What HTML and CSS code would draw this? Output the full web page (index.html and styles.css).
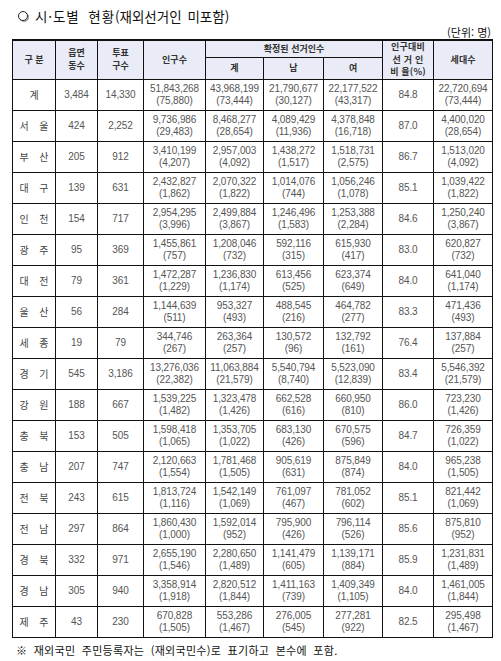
FILE: index.html
```html
<!DOCTYPE html>
<html lang="ko">
<head>
<meta charset="utf-8">
<link rel="stylesheet" href="styles.css">
</head>
<body>
<div class="page">
  <div class="title"><span class="ring"></span><span class="title-text">시·도별 현황<span class="paren">(재외선거인 미포함)</span></span></div>
  <div class="unit">(단위: 명)</div>
  <table class="tbl">
    <colgroup>
      <col style="width:43px"><col style="width:42px"><col style="width:46px"><col style="width:62px"><col style="width:58px"><col style="width:60px"><col style="width:59px"><col style="width:51px"><col style="width:59px">
    </colgroup>
    <thead>
      <tr class="h1">
        <th rowspan="2">구 분</th>
        <th rowspan="2">읍면<br>동수</th>
        <th rowspan="2">투표<br>구수</th>
        <th rowspan="2">인구수</th>
        <th colspan="3">확정된 선거인수</th>
        <th rowspan="2" class="ratio">인구대비<br>선 거 인<br>비 율(%)</th>
        <th rowspan="2">세대수</th>
      </tr>
      <tr class="h2">
        <th>계</th><th>남</th><th>여</th>
      </tr>
    </thead>
    <tbody>
      <tr><td class="rg">계</td><td>3,484</td><td>14,330</td><td>51,843,268<br>(75,880)</td><td>43,968,199<br>(73,444)</td><td>21,790,677<br>(30,127)</td><td>22,177,522<br>(43,317)</td><td>84.8</td><td>22,720,694<br>(73,444)</td></tr>
      <tr><td class="rg">서 울</td><td>424</td><td>2,252</td><td>9,736,986<br>(29,483)</td><td>8,468,277<br>(28,654)</td><td>4,089,429<br>(11,936)</td><td>4,378,848<br>(16,718)</td><td>87.0</td><td>4,400,020<br>(28,654)</td></tr>
      <tr><td class="rg">부 산</td><td>205</td><td>912</td><td>3,410,199<br>(4,207)</td><td>2,957,003<br>(4,092)</td><td>1,438,272<br>(1,517)</td><td>1,518,731<br>(2,575)</td><td>86.7</td><td>1,513,020<br>(4,092)</td></tr>
      <tr><td class="rg">대 구</td><td>139</td><td>631</td><td>2,432,827<br>(1,862)</td><td>2,070,322<br>(1,822)</td><td>1,014,076<br>(744)</td><td>1,056,246<br>(1,078)</td><td>85.1</td><td>1,039,422<br>(1,822)</td></tr>
      <tr><td class="rg">인 천</td><td>154</td><td>717</td><td>2,954,295<br>(3,996)</td><td>2,499,884<br>(3,867)</td><td>1,246,496<br>(1,583)</td><td>1,253,388<br>(2,284)</td><td>84.6</td><td>1,250,240<br>(3,867)</td></tr>
      <tr><td class="rg">광 주</td><td>95</td><td>369</td><td>1,455,861<br>(757)</td><td>1,208,046<br>(732)</td><td>592,116<br>(315)</td><td>615,930<br>(417)</td><td>83.0</td><td>620,827<br>(732)</td></tr>
      <tr><td class="rg">대 전</td><td>79</td><td>361</td><td>1,472,287<br>(1,229)</td><td>1,236,830<br>(1,174)</td><td>613,456<br>(525)</td><td>623,374<br>(649)</td><td>84.0</td><td>641,040<br>(1,174)</td></tr>
      <tr><td class="rg">울 산</td><td>56</td><td>284</td><td>1,144,639<br>(511)</td><td>953,327<br>(493)</td><td>488,545<br>(216)</td><td>464,782<br>(277)</td><td>83.3</td><td>471,436<br>(493)</td></tr>
      <tr><td class="rg">세 종</td><td>19</td><td>79</td><td>344,746<br>(267)</td><td>263,364<br>(257)</td><td>130,572<br>(96)</td><td>132,792<br>(161)</td><td>76.4</td><td>137,884<br>(257)</td></tr>
      <tr><td class="rg">경 기</td><td>545</td><td>3,186</td><td>13,276,036<br>(22,382)</td><td>11,063,884<br>(21,579)</td><td>5,540,794<br>(8,740)</td><td>5,523,090<br>(12,839)</td><td>83.4</td><td>5,546,392<br>(21,579)</td></tr>
      <tr><td class="rg">강 원</td><td>188</td><td>667</td><td>1,539,225<br>(1,482)</td><td>1,323,478<br>(1,426)</td><td>662,528<br>(616)</td><td>660,950<br>(810)</td><td>86.0</td><td>723,230<br>(1,426)</td></tr>
      <tr><td class="rg">충 북</td><td>153</td><td>505</td><td>1,598,418<br>(1,065)</td><td>1,353,705<br>(1,022)</td><td>683,130<br>(426)</td><td>670,575<br>(596)</td><td>84.7</td><td>726,359<br>(1,022)</td></tr>
      <tr><td class="rg">충 남</td><td>207</td><td>747</td><td>2,120,663<br>(1,554)</td><td>1,781,468<br>(1,505)</td><td>905,619<br>(631)</td><td>875,849<br>(874)</td><td>84.0</td><td>965,238<br>(1,505)</td></tr>
      <tr><td class="rg">전 북</td><td>243</td><td>615</td><td>1,813,724<br>(1,116)</td><td>1,542,149<br>(1,069)</td><td>761,097<br>(467)</td><td>781,052<br>(602)</td><td>85.1</td><td>821,442<br>(1,069)</td></tr>
      <tr><td class="rg">전 남</td><td>297</td><td>864</td><td>1,860,430<br>(1,000)</td><td>1,592,014<br>(952)</td><td>795,900<br>(426)</td><td>796,114<br>(526)</td><td>85.6</td><td>875,810<br>(952)</td></tr>
      <tr><td class="rg">경 북</td><td>332</td><td>971</td><td>2,655,190<br>(1,546)</td><td>2,280,650<br>(1,489)</td><td>1,141,479<br>(605)</td><td>1,139,171<br>(884)</td><td>85.9</td><td>1,231,831<br>(1,489)</td></tr>
      <tr><td class="rg">경 남</td><td>305</td><td>940</td><td>3,358,914<br>(1,918)</td><td>2,820,512<br>(1,844)</td><td>1,411,163<br>(739)</td><td>1,409,349<br>(1,105)</td><td>84.0</td><td>1,461,005<br>(1,844)</td></tr>
      <tr><td class="rg">제 주</td><td>43</td><td>230</td><td>670,828<br>(1,505)</td><td>553,286<br>(1,467)</td><td>276,005<br>(545)</td><td>277,281<br>(922)</td><td>82.5</td><td>295,498<br>(1,467)</td></tr>
    </tbody>
  </table>
  <div class="note">※ 재외국민 주민등록자는 (<span class="squiggle">재외국민수</span>)로 표기하고 본수에 포함.</div>
</div>
</body>
</html>
```
FILE: styles.css
```css
html, body {
  margin: 0;
  padding: 0;
  background: #ffffff;
}
.page {
  width: 501px;
  padding: 7px 0 0 0;
  font-family: "Noto Sans CJK KR", "Liberation Sans", sans-serif;
  color: #222;
}
.title {
  display: flex;
  align-items: center;
  height: 17px;
  padding-left: 18px;
  font-size: 13.5px;
  color: #111;
}
.ring {
  display: inline-block;
  width: 8px;
  height: 8px;
  border: 1.5px solid #222;
  border-radius: 50%;
  margin-right: 7px;
  box-shadow: 1px 1px 0 #999;
}
.title-text {
  letter-spacing: 0.9px;
  word-spacing: 4px;
}
.paren {
  letter-spacing: 0;
  word-spacing: 2px;
}
.unit {
  text-align: right;
  font-size: 11px;
  padding-right: 10px;
  margin-top: 2px;
  height: 12px;
  line-height: 12px;
  color: #111;
}
.tbl {
  margin-left: 12px;
  margin-top: 1px;
  width: 480px;
  border-collapse: collapse;
  table-layout: fixed;
  font-family: "Liberation Sans", "Noto Sans CJK KR", sans-serif;
}
.tbl th {
  background: #e9ebf6;
  border: 1px solid #111;
  font-family: "Noto Sans CJK KR", sans-serif;
  font-weight: 700;
  font-size: 9px;
  line-height: 12.5px;
  color: #333;
  padding: 0;
  text-align: center;
}
.tbl thead tr:first-child th {
  border-top: 2px solid #111;
}
.tbl .h1 th {
  height: 16px;
}
.tbl .h2 th {
  height: 20px;
  border-bottom: 1.5px solid #111;
}
.tbl .ratio {
  letter-spacing: 0.2px;
}
.tbl td {
  border: 1px solid #111;
  height: 30px;
  padding: 0;
  text-align: center;
  font-size: 10px;
  line-height: 12px;
  color: #555;
  letter-spacing: -0.1px;
}
.tbl td.rg {
  font-family: "Noto Sans CJK KR", sans-serif;
  font-size: 10px;
  color: #444;
  word-spacing: 8px;
}
.note {
  margin-top: 4px;
  padding-left: 16px;
  font-size: 11px;
  color: #111;
  word-spacing: 3px;
  letter-spacing: 0.3px;
}
.squiggle {
  text-decoration: underline wavy #d24;
  text-decoration-thickness: 1px;
  text-underline-offset: 2px;
}
```
